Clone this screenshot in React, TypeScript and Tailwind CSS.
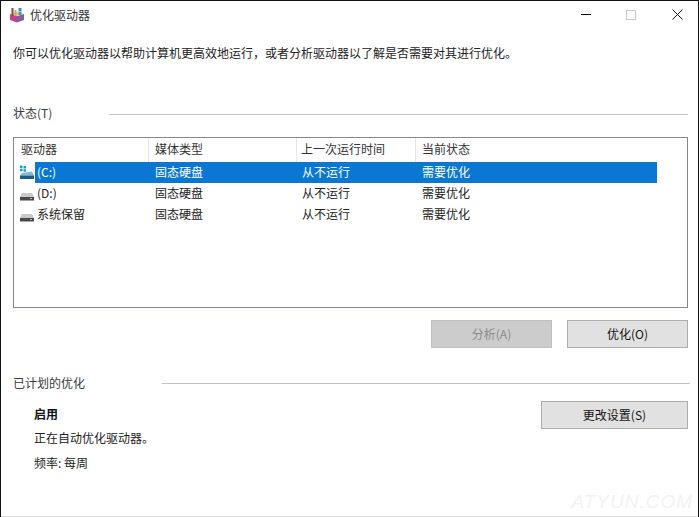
const FONT = "font-['Noto_Sans_CJK_SC',sans-serif]";

const DRIVES = [
  { name: "(C:)", media: "固态硬盘", last: "从不运行", status: "需要优化", system: true },
  { name: "(D:)", media: "固态硬盘", last: "从不运行", status: "需要优化", system: false },
  { name: "系统保留", media: "固态硬盘", last: "从不运行", status: "需要优化", system: false },
];

const AppIcon = () => (
  <svg width="16" height="16" viewBox="0 0 16 16" className="shrink-0">
    <path d="M1 7 L8 9 L8 15.5 L1 13 Z" fill="#c8408a" />
    <path d="M8 9 L15 7 L15 13 L8 15.5 Z" fill="#7d5fa6" />
    <path d="M1 7 L8 4.5 L15 7 L8 9 Z" fill="#d9c4d6" />
    <rect x="2.5" y="1" width="2" height="8" fill="#6b5a48" />
    <rect x="5.5" y="3" width="2" height="6" fill="#d9a53c" />
    <rect x="9.5" y="1" width="3" height="3.5" fill="#2f8fd6" />
    <rect x="9.5" y="5" width="3" height="3" fill="#49a85a" />
  </svg>
);

const DriveIcon = ({ system }: { system: boolean }) => (
  <svg width="16" height="16" viewBox="0 0 16 16" className="shrink-0">
    {system ? (
      <>
        <path d="M1 0.5h2.5v2.5h-2.5zM4.5 1h2.5v2.5h-2.5zM1 3.8h2.5v2.5h-2.5zM4.5 4.2h2.5v2.5h-2.5z" fill="#12a0dc" />
        <path d="M3 8 L13 6.5 L15 10.5 L1 10.5 Z" fill="#7cb9d8" />
        <rect x="1" y="10.5" width="14" height="3.5" fill="#1c5c82" />
      </>
    ) : (
      <>
        <path d="M3 7 L13 7 L15 11 L1 11 Z" fill="#c9c9c9" />
        <rect x="1" y="11" width="14" height="3.5" fill="#4a4a4a" />
        <rect x="11" y="12" width="2" height="1" fill="#9fd08f" />
      </>
    )}
  </svg>
);

export default function App() {
  return (
    <div className={`relative w-[699px] h-[517px] overflow-hidden bg-white border-t border-l border-r border-[#111] ${FONT} text-[#1a1a1a]`}>
      {/* title bar */}
      <div className="flex items-center h-[27px] pl-[8px] pr-[15px]">
        <AppIcon />
        <span className="ml-[5px] text-[12px] text-[#333]">优化驱动器</span>
        <div className="ml-auto flex items-center">
          <div className="w-[10px] h-px bg-black" />
          <div className="ml-[35px] w-[10px] h-[10px] border border-[#c8c8c8]" />
          <svg className="ml-[36px]" width="11" height="11" viewBox="0 0 11 11"><path d="M0.5 0.5 L10.5 10.5 M10.5 0.5 L0.5 10.5" stroke="#111" strokeWidth="1" /></svg>
        </div>
      </div>

      <p className="mt-[17px] ml-[12px] text-[12px] leading-4 text-[#222] whitespace-nowrap">
        你可以优化驱动器以帮助计算机更高效地运行，或者分析驱动器以了解是否需要对其进行优化。
      </p>

      {/* status group */}
      <div className="flex items-center mt-[44px] ml-[12px] mr-[10px]">
        <span className="text-[12px] leading-4 text-[#3c3c3c]">状态(T)</span>
        <div className="ml-[57px] mt-[3px] h-px flex-1 bg-[#c4c4c4]" />
      </div>

      <div className="mt-[16px] ml-[12px] w-[675px] h-[171px] border border-[#828790] bg-white">
        <div className="flex h-[24px] text-[12px] text-[#333]">
          <div className="w-[135px] pl-[7px] pb-[2px] flex items-center border-r border-[#e5e5e5]">驱动器</div>
          <div className="w-[148px] pl-[6px] pb-[2px] flex items-center border-r border-[#e5e5e5]">媒体类型</div>
          <div className="w-[119px] pl-[4px] pb-[2px] flex items-center border-r border-[#e5e5e5]">上一次运行时间</div>
          <div className="flex-1 pl-[6px] pb-[2px] flex items-center">当前状态</div>
        </div>
        {DRIVES.map((d, i) => (
          <div key={d.name} className="flex items-center h-[21px] text-[12px] w-[643px]">
            <div className="w-[21px] pl-[5px] flex items-center"><DriveIcon system={d.system} /></div>
            <div className={`flex flex-1 h-full items-center pb-[2px] ${i === 0 ? "bg-[#0a78d2] text-white" : "text-[#222]"}`}>
              <div className="w-[120px] pl-[2px]">{d.name}</div>
              <div className="w-[147px]">{d.media}</div>
              <div className="w-[120px]">{d.last}</div>
              <div>{d.status}</div>
            </div>
          </div>
        ))}
      </div>

      <div className="flex justify-end gap-[15px] mt-[12px] mr-[10px]">
        <button className="w-[121px] h-[28px] bg-[#cccccc] border border-[#bfbfbf] text-[12px] text-[#8a8a8a]">分析(A)</button>
        <button className="w-[121px] h-[28px] bg-[#e1e1e1] border border-[#adadad] text-[12px] text-[#111]">优化(O)</button>
      </div>

      <div className="flex items-center mt-[27px] ml-[12px] mr-[8px]">
        <span className="text-[12px] leading-4 text-[#3c3c3c]">已计划的优化</span>
        <div className="ml-[77px] mt-[1px] h-px flex-1 bg-[#c4c4c4]" />
      </div>

      <div className="flex justify-between mt-[10px] mr-[10px]">
        <div className="ml-[33px] pt-[5px] text-[12px] text-[#222]">
          <div className="font-bold leading-4 text-[#111]">启用</div>
          <div className="mt-[8px] leading-4">正在自动优化驱动器。</div>
          <div className="mt-[9px] leading-4">频率: 每周</div>
        </div>
        <button className="w-[147px] h-[28px] bg-[#e1e1e1] border border-[#adadad] text-[12px] text-[#111]">更改设置(S)</button>
      </div>

      {/* watermark over the corner */}
      <div className="absolute right-[5px] bottom-[4px] text-[19px] leading-[22px] italic tracking-[1px] text-[#f2f2f2] font-['Liberation_Sans',sans-serif]">ATYUN.COM</div>
      <div className="absolute left-0 right-0 bottom-0 h-px bg-[#dcdcdc]" />
    </div>
  );
}
